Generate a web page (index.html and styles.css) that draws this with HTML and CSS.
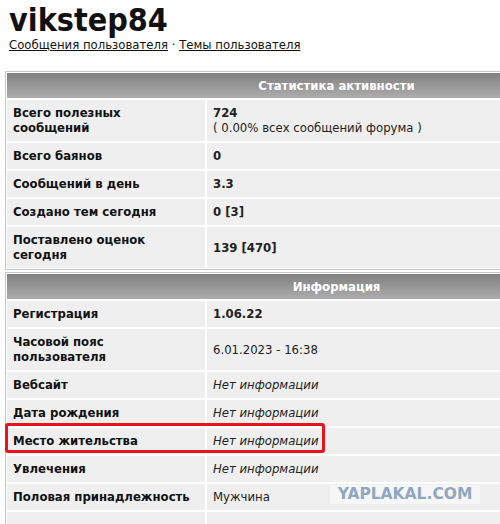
FILE: index.html
```html
<!DOCTYPE html>
<html>
<head>
  <meta charset='UTF-8'>
  <title>vikstep84</title>
  <link rel="stylesheet" href="styles.css">
</head>
<body>
  <div class='hd'>
    <h1>vikstep84</h1>
    <div class='lk'><a href='#'>Сообщения пользователя</a> · <a href='#'>Темы пользователя</a></div>
  </div>

  <table class='tb'>
    <tr><th colspan='2'>Статистика активности</th></tr>
    <tr><td class='l'>Всего полезных сообщений</td><td class='v'><b>724</b><br>( 0.00% всех сообщений форума )</td></tr>
    <tr><td class='l'>Всего баянов</td><td class='v'><b>0</b></td></tr>
    <tr><td class='l'>Сообщений в день</td><td class='v'><b>3.3</b></td></tr>
    <tr><td class='l'>Создано тем сегодня</td><td class='v'><b>0 [3]</b></td></tr>
    <tr><td class='l'>Поставлено оценок сегодня</td><td class='v'><b>139 [470]</b></td></tr>
  </table>

  <table class='tb'>
    <tr><th colspan='2'>Информация</th></tr>
    <tr><td class='l'>Регистрация</td><td class='v'><b>1.06.22</b></td></tr>
    <tr><td class='l'>Часовой пояс пользователя</td><td class='v'>6.01.2023 - 16:38</td></tr>
    <tr><td class='l'>Вебсайт</td><td class='v'><i>Нет информации</i></td></tr>
    <tr><td class='l'>Дата рождения</td><td class='v'><i>Нет информации</i></td></tr>
    <tr><td class='l'>Место жительства</td><td class='v'><i>Нет информации</i></td></tr>
    <tr><td class='l'>Увлечения</td><td class='v'><i>Нет информации</i></td></tr>
    <tr><td class='l'>Половая принадлежность</td><td class='v'>Мужчина</td></tr>
    <tr><td class='l'>&nbsp;</td><td class='v'>&nbsp;</td></tr>
  </table>

  <div class='mark'></div>
  <div class='wm'>YAPLAKAL.COM</div>
</body>
</html>
```

FILE: styles.css
```css
html,body{overflow:hidden;}
body{margin:0;position:relative;background:#fff;color:#111;font-family:"DejaVu Sans Condensed","DejaVu Sans",sans-serif;font-stretch:semi-condensed;font-size:13px;}
.hd{padding-left:9px;}
h1{margin:4px 0 0;font-size:32px;line-height:33px;font-weight:bold;color:#111;}
.lk{line-height:15px;}
.lk a{color:#111;text-decoration:underline;}
.tb{margin:19px 0 0 5px;width:663px;border:1px solid #c6c6c6;border-spacing:0;}
.tb+.tb{margin-top:2px;}
.tb th{padding:5px 6px;line-height:15px;border:1px solid #fff;color:#fff;font-weight:bold;text-align:center;background:linear-gradient(#808080,#adadad);}
.tb td{padding:5px 6px 6px;line-height:15px;border:1px solid #fff;background:#efefef;vertical-align:middle;}
.l{width:186px;font-weight:bold;}
.v{color:#222;}
.mark{position:absolute;left:5px;top:423px;width:314px;height:24px;border:3px solid #e8131b;border-radius:3px;}
.wm{position:absolute;left:330px;top:485px;width:150px;height:19px;background:#f6f6f6;color:#8fa8bf;font-family:"DejaVu Sans",sans-serif;font-stretch:normal;font-weight:bold;font-size:15.5px;line-height:19px;text-align:center;}
```
